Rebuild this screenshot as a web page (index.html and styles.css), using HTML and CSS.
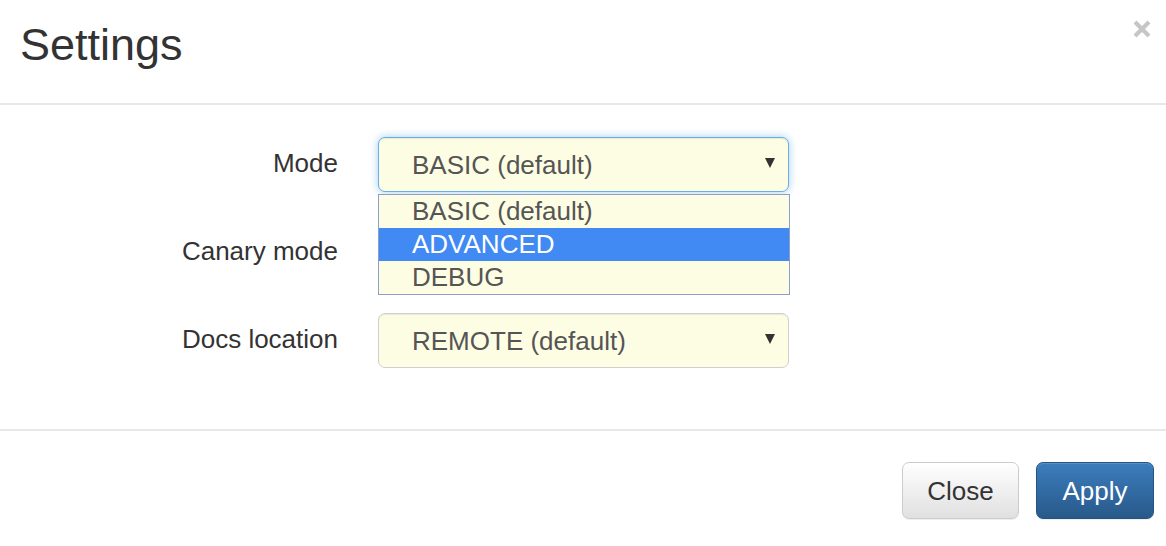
FILE: index.html
```html
<!DOCTYPE html>
<html lang="en">
<head>
<meta charset="utf-8">
<title>Settings</title>
<link rel="stylesheet" href="styles.css">
</head>
<body>
<div class="modal">
  <div class="modal-header">
    <h4 class="modal-title">Settings</h4>
    <button class="close-x" aria-label="Close">
      <svg width="20" height="20" viewBox="0 0 20 20"><path d="M3 3 L17 17 M17 3 L3 17" stroke="#c6c6c6" stroke-width="4.2" stroke-linecap="butt"/></svg>
    </button>
  </div>
  <div class="modal-body">
    <div class="form-row">
      <label class="form-label">Mode</label>
      <div class="control-wrap">
        <div class="select focused">
          <span class="select-value">BASIC (default)</span>
          <span class="caret"></span>
        </div>
        <ul class="dropdown">
          <li class="option">BASIC (default)</li>
          <li class="option active">ADVANCED</li>
          <li class="option">DEBUG</li>
        </ul>
      </div>
    </div>
    <div class="form-row">
      <label class="form-label">Canary mode</label>
      <div class="control-wrap"></div>
    </div>
    <div class="form-row">
      <label class="form-label">Docs location</label>
      <div class="control-wrap">
        <div class="select">
          <span class="select-value">REMOTE (default)</span>
          <span class="caret"></span>
        </div>
      </div>
    </div>
  </div>
  <div class="modal-footer">
    <button class="btn btn-default">Close</button>
    <button class="btn btn-primary">Apply</button>
  </div>
</div>
</body>
</html>
```
FILE: styles.css
```css
* { box-sizing: border-box; }
html, body { margin: 0; padding: 0; background: #fff; }
body {
  font-family: "Liberation Sans", Arial, Helvetica, sans-serif;
  color: #333;
  width: 1166px;
  height: 546px;
  overflow: hidden;
}
.modal { width: 1166px; }
.modal-header {
  height: 105px;
  border-bottom: 2px solid #e8e8e8;
  display: flex;
  justify-content: space-between;
  align-items: flex-start;
  padding: 22px 14px 0 20px;
}
.modal-title {
  margin: 0;
  font-size: 45px;
  font-weight: normal;
  line-height: 45px;
  color: #333;
}
.close-x {
  border: 0;
  background: transparent;
  padding: 0;
  margin-top: -3px;
  width: 20px;
  height: 20px;
  display: block;
}
.close-x svg { display: block; }
.modal-body {
  padding: 32px 0 0 0;
  height: 326px;
  border-bottom: 2px solid #e8e8e8;
  display: flex;
  flex-direction: column;
  gap: 33px;
}
.form-row {
  display: grid;
  grid-template-columns: 338px 411px;
  column-gap: 40px;
  align-items: center;
  height: 55px;
}
.form-label {
  text-align: right;
  font-size: 26px;
  color: #333;
  padding-bottom: 2px;
}
.control-wrap { position: relative; height: 55px; }
.select {
  height: 55px;
  border: 1px solid #cfcfcf;
  border-radius: 7px;
  background: #fdfde4;
  box-shadow: inset 0 1px 1px rgba(0,0,0,.075);
  display: flex;
  align-items: center;
  justify-content: space-between;
  padding: 0 13px 0 33px;
  font-size: 26px;
  color: #555;
}
.select.focused {
  border-color: #66afe9;
  box-shadow: inset 0 1px 1px rgba(0,0,0,.075), 0 0 8px rgba(102,175,233,.6);
}
.select-value { padding-top: 2px; }
.caret {
  width: 0; height: 0;
  border-left: 5.5px solid transparent;
  border-right: 5.5px solid transparent;
  border-top: 10px solid #333;
  margin-top: -4px;
}
.dropdown {
  position: absolute;
  left: 0;
  top: 57px;
  width: 412px;
  margin: 0;
  padding: 0;
  list-style: none;
  background: #fdfde4;
  border: 1px solid #8a9fc9;
}
.option {
  height: 33px;
  line-height: 33px;
  padding-left: 33px;
  font-size: 26px;
  color: #555;
}
.option.active { background: #418af3; color: #fff; }
.modal-footer {
  display: flex;
  justify-content: flex-end;
  gap: 17px;
  padding: 31px 12px 0 0;
}
.btn {
  font-family: "Liberation Sans", Arial, Helvetica, sans-serif;
  font-size: 26px;
  height: 57px;
  width: 117px;
  border-radius: 7px;
  padding: 2px 0 0;
  cursor: pointer;
}
.btn-default {
  color: #333;
  background: linear-gradient(to bottom, #fff 0%, #e0e0e0 100%);
  border: 1px solid #cccccc;
  box-shadow: inset 0 1px 0 rgba(255,255,255,.15), 0 1px 1px rgba(0,0,0,.075);
}
.btn-primary {
  width: 118px;
  color: #fff;
  background: linear-gradient(to bottom, #3c7dbd 0%, #28598a 100%);
  border: 1px solid #245580;
  box-shadow: inset 0 1px 0 rgba(255,255,255,.15), 0 1px 1px rgba(0,0,0,.075);
}
```
